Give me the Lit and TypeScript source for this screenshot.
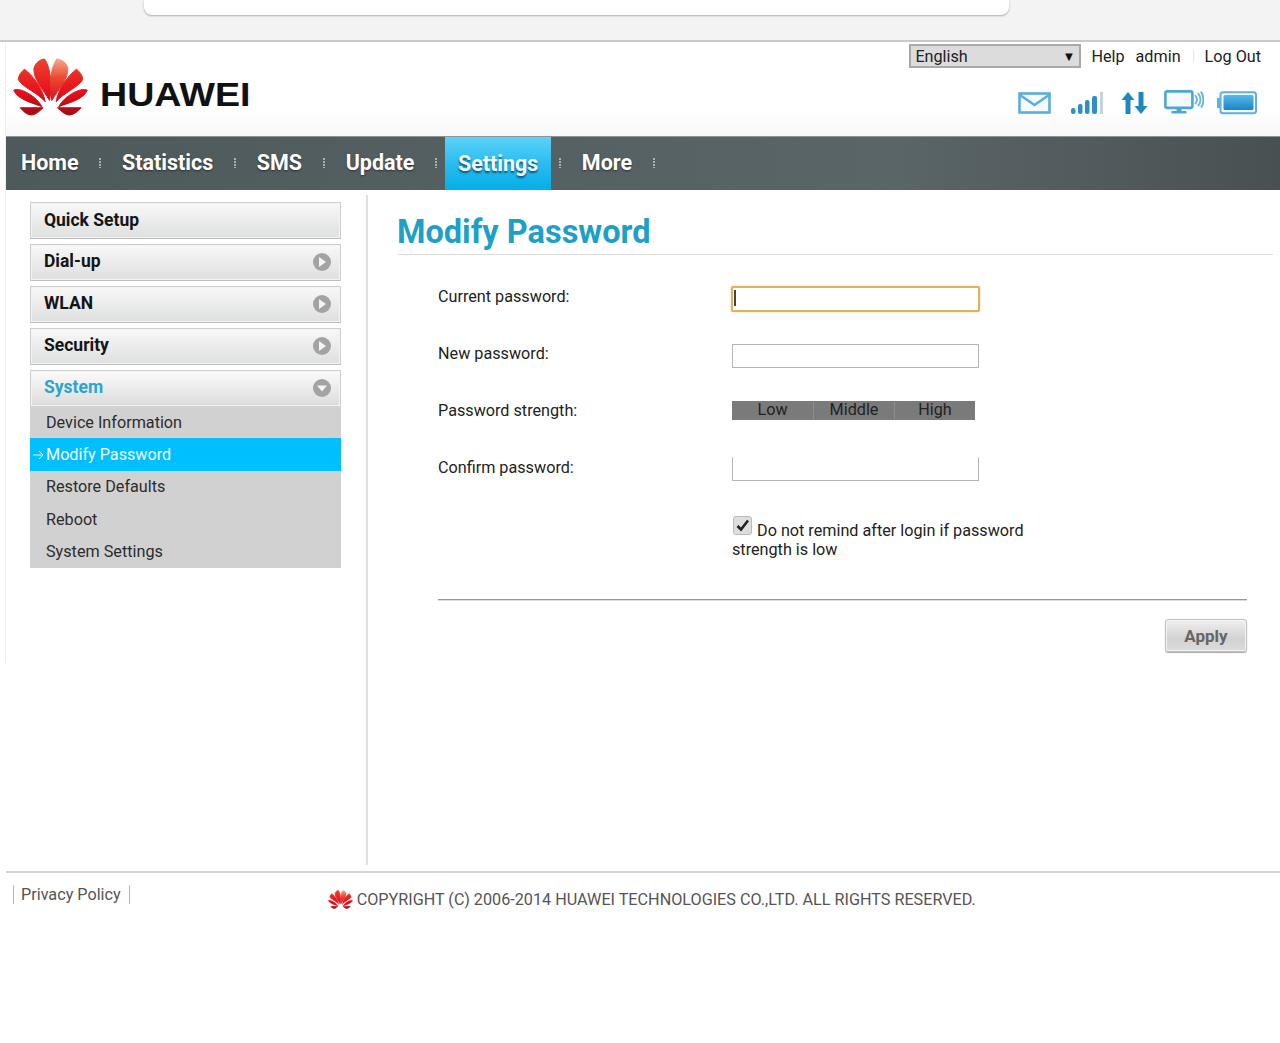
import { LitElement, html, css, svg } from "lit";
import { customElement } from "lit/decorators.js";

const petals = svg`
  <g stroke-width="3" stroke-linejoin="round">
  <path fill="url(#pa)" stroke="url(#pa)" d="M150 303C132 272 101 240 103 207C106 190 122 179 135 178C152 200 160 255 150 303Z"/>
  <path fill="url(#pb)" stroke="url(#pb)" d="M157 303C147 255 155 200 172 178C186 179 203 190 205 207C207 240 175 272 157 303Z"/>
  <path fill="url(#pa)" stroke="url(#pa)" d="M137 307C115 280 66 262 56 240C56 228 66 215 75 209C100 228 130 268 137 307Z"/>
  <path fill="url(#pa)" stroke="url(#pa)" d="M170 307C176 268 206 228 231 209C240 215 250 228 250 240C240 262 192 280 170 307Z"/>
  <path fill="url(#pa)" stroke="url(#pa)" d="M127 322C100 310 55 302 42 272C60 262 112 290 127 322Z"/>
  <path fill="url(#pa)" stroke="url(#pa)" d="M178 322C193 290 245 262 264 272C251 302 206 310 178 322Z"/>
  <path fill="url(#pa)" stroke="url(#pa)" d="M62 325L131 325C120 335 108 347 94 347C80 345 70 335 62 325Z"/>
  <path fill="url(#pa)" stroke="url(#pa)" d="M174 325L245 325C236 335 226 345 211 347C197 347 185 335 174 325Z"/>
  </g>
`;

const logoDefs = (a: string, b: string) => svg`
  <defs>
    <linearGradient id=${a} gradientUnits="userSpaceOnUse" x1="0" y1="176" x2="0" y2="349"><stop offset="0" stop-color="#f0432f"/><stop offset=".6" stop-color="#e3101c"/><stop offset="1" stop-color="#a30a10"/></linearGradient>
    <linearGradient id=${b} gradientUnits="userSpaceOnUse" x1="0" y1="176" x2="0" y2="305"><stop offset="0" stop-color="#f6ab8f"/><stop offset=".45" stop-color="#ec4a30"/><stop offset="1" stop-color="#d8101a"/></linearGradient>
  </defs>`;

const flower = (w: number, h: number) => html`<svg width=${w} height=${h} viewBox="40 176 226 173">${logoDefs("pa", "pb")}${petals}</svg>`;

const navItems = ["Home", "Statistics", "SMS", "Update", "Settings", "More"];
const menu = [
  { t: "Quick Setup" },
  { t: "Dial-up", a: "r" },
  { t: "WLAN", a: "r" },
  { t: "Security", a: "r" },
];
const subs = ["Device Information", "Modify Password", "Restore Defaults", "Reboot", "System Settings"];

const arrow = (dir: string) => html`<svg class="chev" width="20" height="20" viewBox="0 0 20 20">
  <circle cx="10" cy="10" r="9" fill="#a3a3a3"/>
  ${dir === "r"
    ? svg`<path d="M7 5l7 5-7 5z" fill="#f4f4f4"/>`
    : svg`<path d="M5 7.5h10l-5 6z" fill="#f4f4f4"/>`}
</svg>`;

@customElement("app-root")
export class AppRoot extends LitElement {
  static styles = css`
    :host { display: block; width: 1280px; height: 1043px; overflow: hidden; background: #fff; font-family: Roboto, "Liberation Sans", sans-serif; color: #222; font-size: 16.2px; }
    .chrome { height: 40px; background: #f3f3f3; border-bottom: 2px solid #c9c9c9; padding-left: 144px; }
    .card { width: 865px; height: 15px; background: #fff; border-radius: 0 0 8px 8px; box-shadow: 0 1px 2px rgba(0,0,0,.3); }
    .page { margin-left: 5px; border-left: 1px solid; border-image: linear-gradient(#eee 62%, transparent 62%) 1; height: 1001px; box-sizing: border-box; }
    .header { height: 94px; display: flex; justify-content: space-between; background: linear-gradient(#fff 70%, #f8f8f8); }
    .brand { display: flex; align-items: flex-start; padding: 16px 0 0 7px; gap: 12px; }
    .word { font-family: "Liberation Sans", sans-serif; font-weight: 700; font-size: 33px; line-height: 38px; color: #111; transform: scaleX(1.14); transform-origin: left; margin-top: 18px; }
    .tools { display: flex; flex-direction: column; align-items: flex-end; padding: 1px 19px 0 0; }
    .top { display: flex; align-items: center; height: 26px; color: #222; }
    .select { width: 172px; height: 24px; box-sizing: border-box; border: 2px solid #a8a8a8; background: #dcdcdc; display: flex; justify-content: space-between; align-items: center; padding: 0 4px 0 4px; margin-right: 10px; }
    .select i { font-style: normal; font-size: 13px; color: #111; }
    .help { margin-right: 11px; }
    .admin { margin-right: 12px; }
    .dv { width: 1px; height: 12px; background: #e6e6e6; margin-right: 11px; }
    .icons { display: flex; align-items: center; margin-top: 21px; margin-right: 4px; }
    .icons svg { display: block; }
    nav { height: 54px; display: flex; background: linear-gradient(90deg, #4e595b 0%, #566163 45%, #5a6567 70%, #495052 100%); box-shadow: inset 0 1px 0 #8e9496; padding-left: 15px; color: #fff; font-weight: 700; font-size: 21.5px; }
    nav a { display: flex; align-items: center; color: #fff; line-height: 54px; text-shadow: 0 1px 2px rgba(0,0,0,.5); }
    nav .sep { width: 43.5px; display: flex; align-items: center; justify-content: center; }
    nav .sep b { display: block; width: 2px; height: 10px; background: repeating-linear-gradient(#aab0b2 0 2px, transparent 2px 3px); }
    nav a.on { padding: 0 13px; margin: 1px -13px 0 -13px; background: linear-gradient(#5bd2fa, #2bbcf0 50%, #05ade8); color: #f2fbff; text-shadow: 0 2px 2px rgba(0,50,80,.75); }
    .body { display: flex; height: 683px; border-bottom: 2px solid #d4d4d4; box-sizing: border-box; }
    aside { width: 311px; padding: 12px 0 0 24px; flex: none; }
    .mi { height: 37px; box-sizing: border-box; border: 1px solid #cdcdcd; border-bottom-color: #bcbcbc; background: linear-gradient(#f8f8f8, #dedfdf); margin-bottom: 5px; padding: 0 8px 0 13px; display: flex; align-items: center; justify-content: space-between; font-weight: 700; font-size: 17.5px; color: #151515; box-shadow: inset 0 0 0 1px #f4f4f4; }
    .mi span { margin-top: -3px; }
    .mi:first-child span { margin-top: -1px; }
    .mi svg { margin-top: -1px; }
    .mi.sys { margin-bottom: 0; height: 36px; color: #2aa5cf; border-bottom: 0; background: linear-gradient(#fbfbfb, #dcdcdc); }
    .mi.sys span { margin-top: -3px; }
    .subs { height: 162px; display: grid; grid-template-rows: repeat(5, 1fr); background: #d1d1d1; box-sizing: border-box; }
    .sub { display: flex; align-items: center; padding-left: 16px; color: #2c2c2c; }
    .sub.on { background: #00bfff; color: #eefaff; padding-left: 3px; }
    .sub.on svg { margin-right: 2px; }
    main { margin: 5px 0 0 25px; height: 670px; border-left: 2px solid #e0e0e0; padding-left: 30px; width: 875px; flex: none; }
    h1 { margin: 0; height: 60px; box-sizing: border-box; border-bottom: 1px solid #dcdcdc; font-size: 32.5px; font-weight: 700; color: #1e9fc6; line-height: 74px; width: 875px; white-space: nowrap; text-indent: -1px; }
    .form { padding: 31px 0 0 40px; }
    .row { height: 57px; display: flex; }
    .row label { width: 294px; line-height: 22px; flex: none; color: #222; }
    .input { width: 247px; height: 24px; margin-top: 1px; box-sizing: border-box; border: 1px solid #b4b4b4; background: #fff; }
    .input.focus { width: 249px; height: 26px; margin: 0 0 0 -1px; border: 2px solid #d9b45c; border-radius: 2px; box-shadow: 0 0 2px #e7cf8f; padding: 2px 0 0 1px; }
    .input.focus b { display: block; width: 1.5px; height: 16px; background: #444; }
    .input.open { border-top-color: transparent; margin-top: 0; }
    .strength { display: grid; grid-template-columns: repeat(3, 81px); height: 19px; margin-top: 1px; background: #7a7a7a; }
    .strength span { text-align: center; line-height: 18px; color: #222; border-left: 1px solid #8c8c8c; }
    .strength span:first-child { border-left: 0; }
    .check { margin-left: 294px; width: 300px; line-height: 19px; height: 69px; padding-top: 2px; box-sizing: border-box; color: #222; }
    .box { display: inline-block; width: 19px; height: 19px; box-sizing: border-box; background: #dedede; border: 1px solid #bbb; border-radius: 3px; margin: 0 1px 0 1px; vertical-align: 1px; }
    .box svg { display: block; }
    hr { margin: 16px 0 0; border: 0; height: 1px; background: #999; width: 809px; box-shadow: 0 1px 0 #ddd; }
    .actions { width: 809px; display: flex; justify-content: flex-end; margin-top: 19px; }
    .apply { width: 82px; height: 33px; box-sizing: border-box; border: 1px solid #c0c0c0; border-radius: 3px; background: linear-gradient(#f0f0f0, #d2d2d2 60%, #dcdcdc); color: #666; font-weight: 700; font-size: 17px; display: flex; align-items: center; justify-content: center; box-shadow: 0 1px 1px #aaa, inset 0 0 0 1px #f5f5f5; }
    footer { display: flex; color: #555; }
    .privacy { margin: 12px 0 0 7px; padding: 0 8px 0 7px; border-left: 1px solid #b5b5b5; border-right: 1px solid #b5b5b5; line-height: 19px; height: 19px; white-space: nowrap; }
    .copy { display: flex; align-items: center; margin: 14px 0 0 198px; height: 24px; gap: 4px; white-space: nowrap; }
  `;

  render() {
    return html`
      <div class="chrome"><div class="card"></div></div>
      <div class="page">
        <div class="header">
          <div class="brand">
            ${flower(75, 58)}
            <span class="word">HUAWEI</span>
          </div>
          <div class="tools">
            <div class="top">
              <div class="select"><span>English</span><i>▼</i></div>
              <span class="help">Help</span><span class="admin">admin</span><span class="dv"></span><span>Log Out</span>
            </div>
            <div class="icons">
              <svg width="33" height="24" viewBox="0 0 33 24" style="margin-right:19px"><rect x="1.5" y="2.5" width="30" height="19" fill="#f6fbfe" stroke="#5aaedb" stroke-width="2.6"/><path d="M2 4l14.5 10L31 4" fill="none" stroke="#5aaedb" stroke-width="2.6"/></svg>
              <svg width="34" height="24" viewBox="0 0 34 24" style="margin-right:17px"><g fill="#2f8fc4"><rect x="1" y="17" width="4.5" height="6" rx="2"/><rect x="8" y="13" width="4.5" height="10" rx="2"/><rect x="15" y="9" width="4.5" height="14" rx="2"/><rect x="22" y="5" width="5" height="18" rx="2"/></g><rect x="30" y="1" width="3" height="22" fill="#c8d4da"/></svg>
              <svg width="27" height="24" viewBox="0 0 27 24" style="margin-right:16px"><path d="M7 1l6.5 8H9.5v14h-5V9H.5zM17.5 1h5v14h4l-6.5 8-6.5-8h4z" fill="#2087bd"/></svg>
              <svg width="40" height="25" viewBox="0 0 40 25" style="margin-right:13px"><rect x="1.4" y="1.4" width="27" height="16.5" rx="2" fill="#f4fafd" stroke="#4ea6d6" stroke-width="2.6"/><path d="M12.5 18h5v3h5v2.5H7.500V21h5z" fill="#4ea6d6"/><path d="M31 5q4 5 0 9M34 3q5 7 0 13M37 1.500q5 9 0 16" fill="none" stroke="#6cb6de" stroke-width="2"/></svg>
              <svg width="40" height="24" viewBox="0 0 40 24"><rect x="3.500" y="1.200" width="35.500" height="21" rx="2.500" fill="#f2f9fd" stroke="#5fb0dc" stroke-width="2"/><rect x="0" y="7" width="3" height="10" fill="#5fb0dc"/><rect x="6.500" y="4" width="30" height="15" rx="1.500" fill="url(#bat)"/><defs><linearGradient id="bat" x1="0" y1="0" x2="0" y2="1"><stop offset="0" stop-color="#58b9ea"/><stop offset="1" stop-color="#1a85c8"/></linearGradient></defs></svg>
            </div>
          </div>
        </div>
        <nav>
          ${navItems.map((n) => html`
            ${n === "Settings" ? html`<a class="on">${n}</a>` : html`<a>${n}</a>`}
            <span class="sep"><b></b></span>
          `)}
        </nav>
        <div class="body">
          <aside>
            ${menu.map(m => html`<div class="mi"><span>${m.t}</span>${m.a ? arrow(m.a) : ""}</div>`)}
            <div class="mi sys"><span>System</span>${arrow("d")}</div>
            <div class="subs">
              ${subs.map(s => s === "Modify Password"
                ? html`<div class="sub on"><svg width="11" height="10" viewBox="0 0 11 10"><path d="M0 5h10M6 1l4 4-4 4" fill="none" stroke="#d8f4ff" stroke-width="1"/></svg>${s}</div>`
                : html`<div class="sub">${s}</div>`)}
            </div>
          </aside>
          <main>
            <h1>Modify Password</h1>
            <div class="form">
              <div class="row"><label>Current password:</label><div class="input focus"><b></b></div></div>
              <div class="row"><label>New password:</label><div class="input"></div></div>
              <div class="row"><label>Password strength:</label><div class="strength"><span>Low</span><span>Middle</span><span>High</span></div></div>
              <div class="row"><label>Confirm password:</label><div class="input open"></div></div>
              <div class="check"><span class="box"><svg width="17" height="17" viewBox="0 0 17 17"><path d="M3.500 9l3.500 3.500 7-9" fill="none" stroke="#222" stroke-width="2.600"/></svg></span> Do not remind after login if password strength is low</div>
              <hr />
              <div class="actions"><div class="apply">Apply</div></div>
            </div>
          </main>
        </div>
        <footer>
          <div class="privacy">Privacy Policy</div>
          <div class="copy">${flower(25, 19)}<span>COPYRIGHT (C) 2006-2014 HUAWEI TECHNOLOGIES CO.,LTD. ALL RIGHTS RESERVED.</span></div>
        </footer>
      </div>
    `;
  }
}
